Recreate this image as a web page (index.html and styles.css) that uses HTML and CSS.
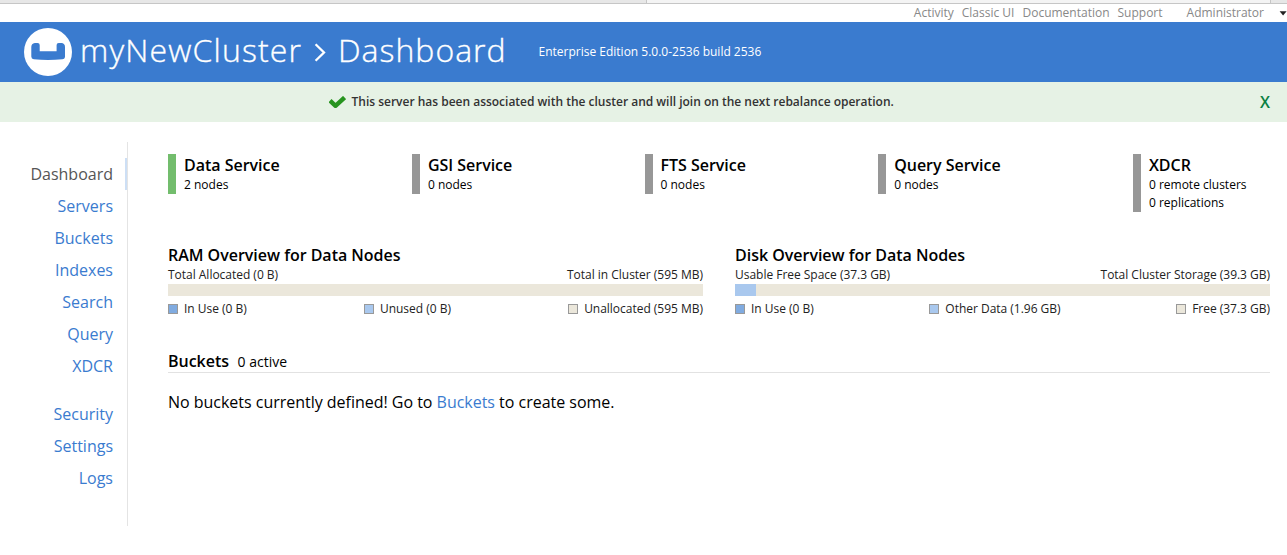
FILE: index.html
```
<!DOCTYPE html>
<html lang="en">
<head>
<meta charset="utf-8">
<title>myNewCluster - Dashboard</title>
<link rel="stylesheet" href="styles.css">
</head>
<body>
<div class="tabstrip"><div class="tab tab-first"></div><div class="tab tab-current"></div><div class="tab tab-last"></div></div>
<nav class="utility">
  <a class="u-activity">Activity</a><a class="u-classic">Classic UI</a><a class="u-docs">Documentation</a><a class="u-support">Support</a><a class="u-admin">Administrator</a>
  <svg class="caret" width="8" height="5" viewBox="0 0 8 5"><path d="M0.6 0.3h7L4.1 4.6z" fill="#222"/></svg>
</nav>
<header class="masthead">
  <svg class="logo" width="48" height="48" viewBox="0 0 48 48"><circle cx="24" cy="24" r="24" fill="#fff"/><path d="M10.8 15H13.5Q15.7 15 15.7 17V23.2H32.6V17Q32.6 15 34.8 15H37.3Q41 15.3 41 19V28.5Q41 31 38.3 31.3Q24 32.7 9.8 31.3Q7.3 31 7.3 28.5V19Q7.3 15.4 10.8 15Z" fill="#3a7bcf"/></svg>
  <h1 class="title"><span class="cluster">myNewCluster</span><svg class="chevron" width="12" height="19" viewBox="0 0 12 19"><path d="M1.6 1.3L10 9.5L1.6 17.7" fill="none" stroke="#fff" stroke-width="2.3"/></svg><span class="page">Dashboard</span></h1>
  <span class="version">Enterprise Edition 5.0.0-2536 build 2536</span>
</header>
<div class="notice">
  <svg class="check" width="17" height="13" viewBox="0 0 17 13"><path d="M2.6 6.2L6.5 9.8L13.9 3" fill="none" stroke="#27941f" stroke-width="4.4" stroke-linejoin="round" stroke-linecap="square"/></svg>
  <span class="message">This server has been associated with the cluster and will join on the next rebalance operation.</span>
  <span class="close">X</span>
</div>
<div class="layout">
  <nav class="sidebar">
    <a class="active">Dashboard</a><a>Servers</a><a>Buckets</a><a>Indexes</a><a>Search</a><a>Query</a><a>XDCR</a>
    <a class="group">Security</a><a>Settings</a><a>Logs</a>
  </nav>
  <main class="content">
    <section class="services">
      <div class="service healthy"><h2>Data Service</h2><p>2 nodes</p></div>
      <div class="service"><h2>GSI Service</h2><p>0 nodes</p></div>
      <div class="service"><h2>FTS Service</h2><p>0 nodes</p></div>
      <div class="service"><h2>Query Service</h2><p>0 nodes</p></div>
      <div class="service"><h2>XDCR</h2><p>0 remote clusters</p><p>0 replications</p></div>
    </section>
    <section class="overviews">
      <div class="overview">
        <h2>RAM Overview for Data Nodes</h2>
        <div class="row"><span>Total Allocated (0 B)</span><span>Total in Cluster (595 MB)</span></div>
        <div class="bar"></div>
        <div class="row legend"><span><i class="used"></i>In Use (0 B)</span><span><i class="other"></i>Unused (0 B)</span><span><i class="free"></i>Unallocated (595 MB)</span></div>
      </div>
      <div class="overview">
        <h2>Disk Overview for Data Nodes</h2>
        <div class="row"><span>Usable Free Space (37.3 GB)</span><span>Total Cluster Storage (39.3 GB)</span></div>
        <div class="bar"><div class="fill" style="width:21px"></div></div>
        <div class="row legend"><span><i class="used"></i>In Use (0 B)</span><span><i class="other"></i>Other Data (1.96 GB)</span><span><i class="free"></i>Free (37.3 GB)</span></div>
      </div>
    </section>
    <section class="buckets">
      <div class="heading"><h2>Buckets</h2><span>0 active</span></div>
      <p>No buckets currently defined! Go to <a>Buckets</a> to create some.</p>
    </section>
  </main>
</div>
</body>
</html>
```
FILE: styles.css
```
* { box-sizing: border-box; }
body { margin: 0; background: #fff; color: #000; font-family: "Open Sans", "Noto Sans", sans-serif; font-size: 12px; height: 555px; overflow: hidden; }
h1, h2, p { margin: 0; }
svg { display: block; flex: none; }
.tabstrip { display: flex; height: 4px; border-bottom: 1px solid #c6c6c6; background: #e7e7e7; }
.tab-first { width: 647px; border-right: 1px solid #c6c6c6; }
.tab-current { width: 624px; background: #f4f4f4; border-right: 1px solid #c6c6c6; }
.utility { height: 18px; display: flex; justify-content: flex-end; align-items: center; font-size: 12px; line-height: 18px; color: #888; white-space: nowrap; }
.utility a + a { margin-left: 8px; }
.utility .u-admin { margin-left: 24px; }
.caret { margin-left: 15px; }
.masthead { height: 60px; background: #3a7bcf; color: #fff; display: flex; align-items: center; padding-left: 24px; white-space: nowrap; }
.title { display: flex; align-items: center; margin-left: 8px; font-size: 32px; font-weight: 300; line-height: 56px; letter-spacing: 1px; -webkit-text-stroke: 0.35px #fff; }
.cluster { width: 234px; padding-bottom: 4px; letter-spacing: 1.15px; }
.chevron { width: 12px; }
.page { width: 168px; margin-left: 12px; padding-bottom: 4px; }
.version { margin-left: 32.5px; padding-bottom: 2px; }
.notice { height: 40px; background: #e6f2e5; display: flex; align-items: center; padding: 0 17px 0 329px; white-space: nowrap; }
.message { margin-left: 5.5px; padding-bottom: 2px; font-weight: 600; color: #333; letter-spacing: -0.008px; }
.close { margin-left: auto; color: #0b8043; font-size: 16px; font-weight: 600; }
.layout { display: flex; padding-top: 20px; }
.sidebar { width: 128px; height: 384px; border-right: 1px solid #e4e4e4; padding-top: 16px; display: flex; flex-direction: column; font-size: 16px; line-height: 32px; text-align: right; color: #3a7bcf; }
.sidebar a { padding-right: 14px; }
.sidebar .active { color: #555; border-right: 2px solid #cddff5; padding-right: 12px; }
.sidebar .group { margin-top: 16px; }
.content { flex: 1; padding: 12px 17px 0 40px; white-space: nowrap; }
.content h2 { font-size: 16px; font-weight: 600; line-height: 22px; letter-spacing: -0.02px; }
.services { height: 90px; display: flex; align-items: flex-start; justify-content: space-between; padding-right: 23.5px; }
.service { border-left: 8px solid #979797; padding-left: 8px; }
.service p { line-height: 18px; }
.healthy { border-color: #73bd6d; }
.overviews { display: grid; grid-template-columns: 535px 535px; gap: 32px; }
.row { display: flex; justify-content: space-between; line-height: 18px; color: #222; letter-spacing: -0.02px; }
.bar { height: 12px; background: #ebe7db; }
.fill { height: 12px; background: #a9c8ee; }
.legend { margin-top: 4px; }
.legend span { display: flex; align-items: center; }
.legend i { width: 10px; height: 10px; border: 1px solid #999; margin-right: 6px; }
.used { background: #80abe0; }
.other { background: #a9c8ee; }
.free { background: #ebe7db; }
.buckets { margin-top: 32px; }
.heading { display: flex; align-items: baseline; height: 23px; border-bottom: 1px solid #e2e2e2; }
.heading span { margin-left: 8.5px; font-size: 14px; line-height: 22px; }
.buckets p { margin-top: 17px; font-size: 16px; line-height: 24px; letter-spacing: -0.02px; }
.buckets a { color: #3a7bcf; }
```
